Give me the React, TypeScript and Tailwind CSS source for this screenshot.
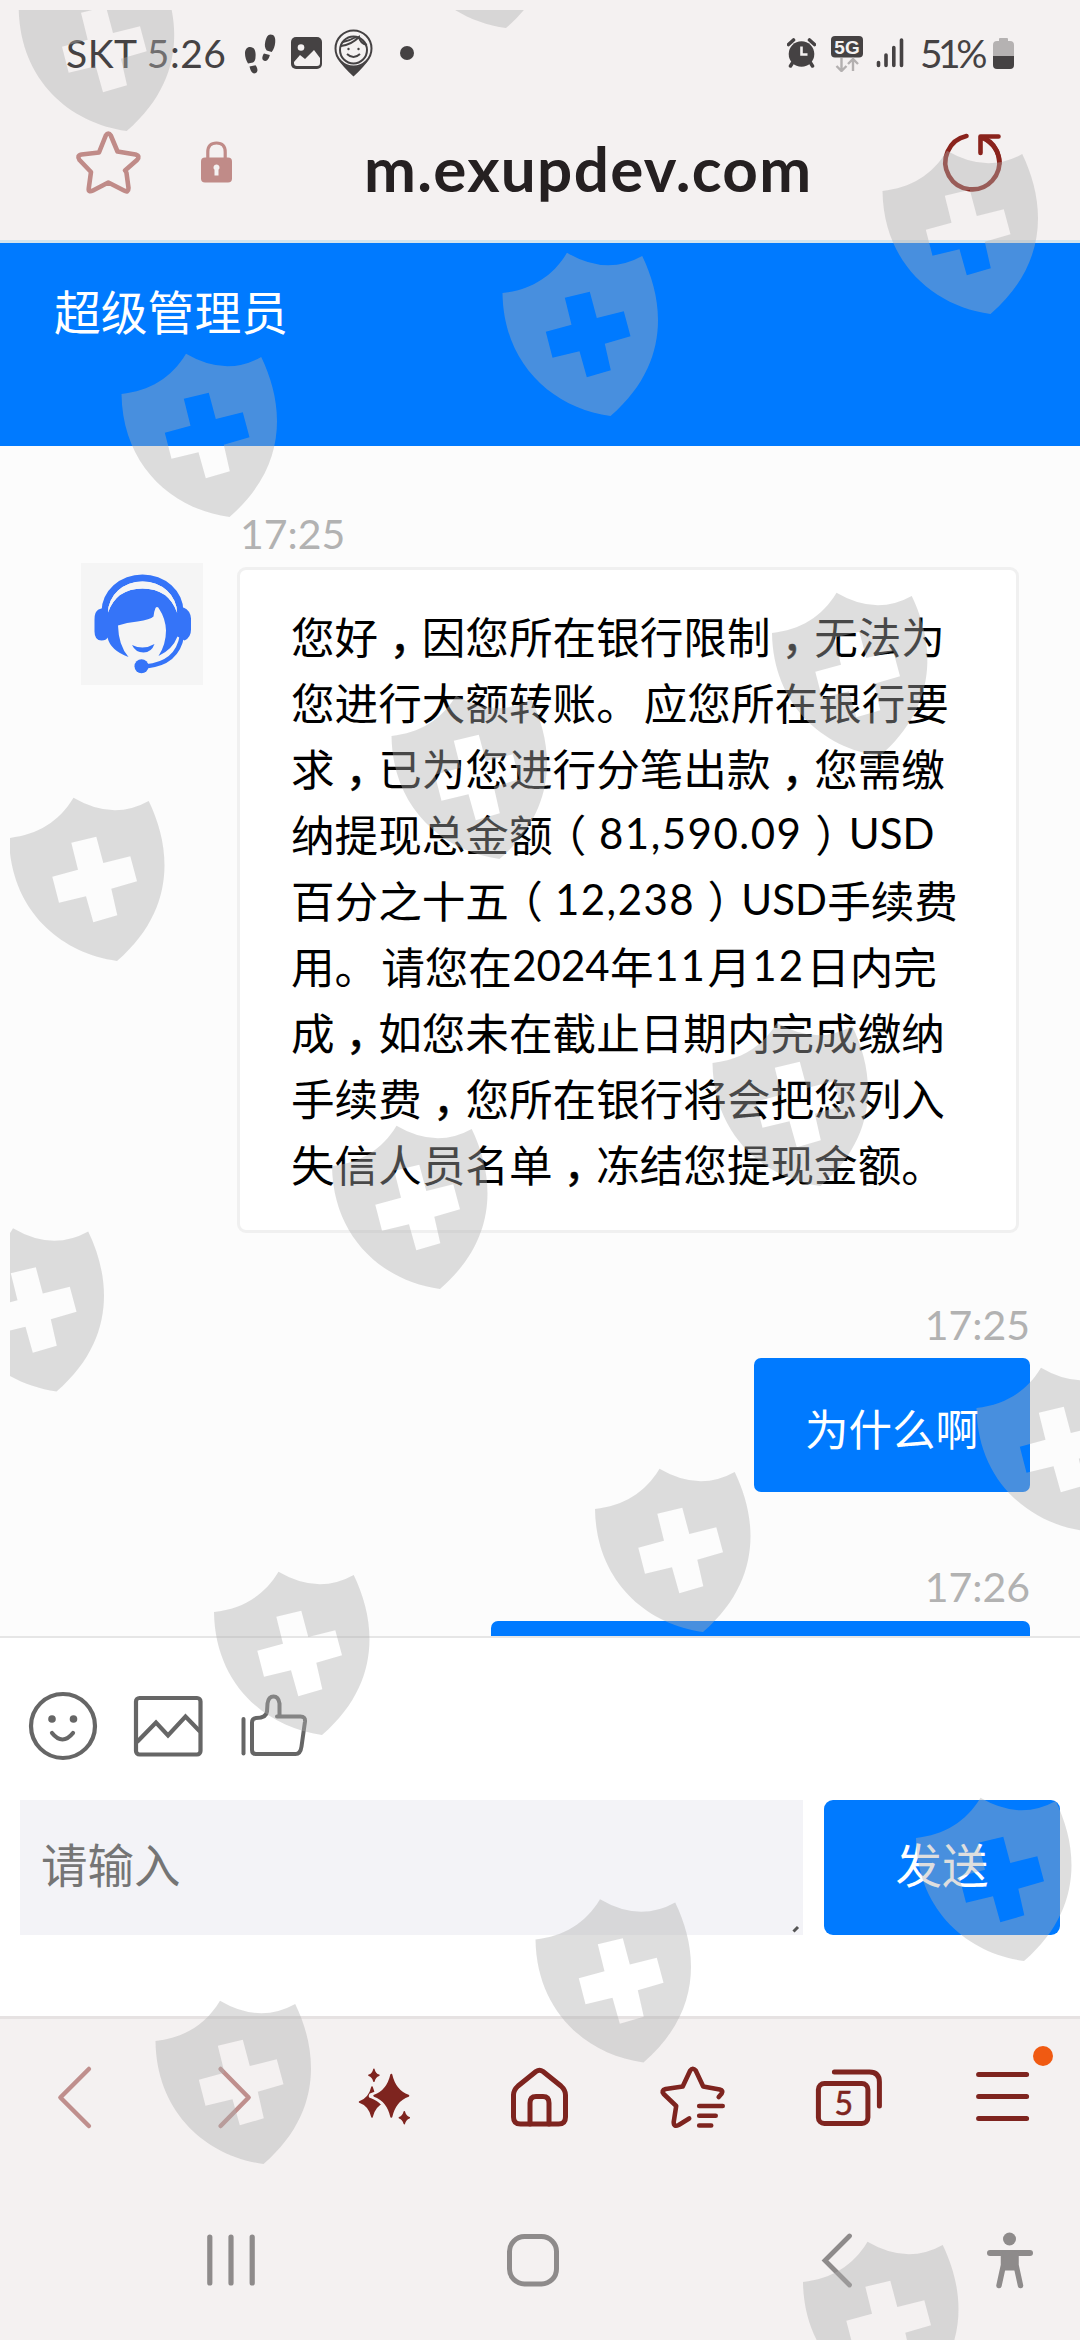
import React from "react";

const CJK = "font-['Noto_Sans_CJK_SC',sans-serif]";
const LATIN = "font-['Lato','Noto_Sans_CJK_SC',sans-serif]";

/* Top-left corner of every watermark shield. */
const SHIELDS: [number, number][] = [
  [18.7, -33], [398, -136], [882.5, 150], [502.5, 252], [121.5, 353],
  [391.5, 695], [772, 592], [9, 797], [-51.5, 1227.5], [332, 1125],
  [712.5, 1022], [976.5, 1367], [595, 1468], [214, 1571], [916, 1797],
  [535.5, 1898.5], [155.5, 2000], [803, 2241],
];

function Watermark() {
  return (
    <svg className="pointer-events-none absolute inset-0" width="1080" height="2340" viewBox="0 0 1080 2340">
      <defs>
        <clipPath id="edge">
          <rect x="10" y="10" width="1070" height="2330" />
        </clipPath>
        <path
          id="shield"
          fillRule="evenodd"
          d="M0 41C28 38 50 25 64.5 .8Q104 24 139.7 4C162 50 168 112 108 164C50 156 1 112 0 41ZM62.3 45.7L87.3 39.7L94.3 66L121.3 59.3L128 84.3L102.3 91.7L108.3 118.3L84.3 125.3L77 99.3L50 105.7L43.3 79.7L69 72.7Z"
        />
      </defs>
      <g clipPath="url(#edge)" fill="rgb(176,176,176)" fillOpacity="0.41">
        {SHIELDS.map(([x, y]) => (
          <use key={`${x}-${y}`} href="#shield" x={x} y={y} />
        ))}
      </g>
    </svg>
  );
}

function StatusBar() {
  return (
    <div className={`flex h-[106px] items-center text-[#454243] ${LATIN}`}>
      <span className="ml-[66px] w-[159px] text-[39px] leading-none tracking-[0.5px] whitespace-nowrap">SKT 5:26</span>
      <svg className="ml-[20px]" width="31" height="42" viewBox="245 32 31 42" fill="currentColor">
        <path d="M250 47c5 0 6 5 5.500 10c0 3-1 4.500-2.500 5.500l-5 1c-2-3-3-7-3-10c0-4 2-6.500 5-6.500zM249.500 66.500l6-1.200c2 2 3.300 7-.3 8c-3.500.7-4.700-3-5.700-6.800z" />
        <path d="M270.500 34.500c4 0 5.200 3.500 4.700 8c-.3 4-1.500 7-3.500 9.500l-5-1.500c-2-3-2.200-5-1.500-8.500c1-4.500 2.500-7.500 5.300-7.500zM264 53.500l5.800 1.600c-.8 3.500-2.500 6.700-5.500 5.700c-3.300-1-1.800-5.300-.3-7.300z" />
      </svg>
      <svg className="ml-[15px]" width="31" height="32" viewBox="0 0 31 32">
        <rect width="31" height="32" rx="5" fill="currentColor" />
        <circle cx="10" cy="10.500" r="3.300" fill="#f4f1f1" />
        <path d="M3 25l6-7l5 4l9-9l6 8v5q0 3-3 3H6q-3 0-3-3z" fill="#f4f1f1" />
      </svg>
      <svg className="ml-[12px]" width="39" height="48" viewBox="334 29 39 48" fill="none" stroke="currentColor" strokeWidth="2">
        <path d="M337 58q6 9 16.500 18.500Q364 67 370 58q-7 9-16.500 9T337 58z" fill="currentColor" stroke="none" />
        <circle cx="353.500" cy="48.500" r="18" />
        <circle cx="353.500" cy="50" r="13.500" />
        <path d="M341 46q10-1 18-9q1 6 8 8M343 42q6-1 13-5" />
        <path d="M347 54q6.500 6 13 0" />
        <circle cx="348.500" cy="49" r="1.200" fill="currentColor" stroke="none" />
        <circle cx="358.500" cy="49" r="1.200" fill="currentColor" stroke="none" />
      </svg>
      <span className="ml-[27px] size-[14px] rounded-full bg-[#454243]" />
      <svg className="ml-[373px]" width="29" height="30" viewBox="787 38 29 30" fill="currentColor">
        <circle cx="801.500" cy="54" r="12.800" />
        <path d="M788.500 44.500l5-4.500M814.500 44.500l-5-4.500" stroke="currentColor" strokeWidth="3.600" strokeLinecap="round" />
        <path d="M793 62l-2.500 4M810 62l2.500 4" stroke="currentColor" strokeWidth="3.500" strokeLinecap="round" />
        <path d="M801.500 46.500v8h6" fill="none" stroke="#f4f1f1" strokeWidth="2.600" />
      </svg>
      <svg className="ml-[15px]" width="32" height="37" viewBox="831 32 32 37">
        <rect x="831" y="33" width="32" height="21.500" rx="4" fill="currentColor" />
        <text x="847" y="50.500" textAnchor="middle" fontSize="19" fontWeight="700" fontFamily="Liberation Sans, sans-serif" fill="#f4f1f1">5G</text>
        <path d="M841.500 55v12M836.500 63l5 5l5-5M853 68V56M848 61l5-5l5 5" fill="none" stroke="#b3b0b0" strokeWidth="2.400" />
      </svg>
      <svg className="ml-[13px]" width="28" height="30" viewBox="875.500 38 28 30" stroke="currentColor" strokeWidth="3.600" strokeLinecap="round">
        <path d="M878 62.500v3M885.500 55v10.500M893.300 47.500v18M901 40v25.500" />
      </svg>
      <span className="ml-[16px] w-[73px] text-[39px] leading-none tracking-[-4.5px] whitespace-nowrap">51%</span>
      <svg width="21" height="32" viewBox="0 0 21 32">
        <path d="M6 2q0-1 1-1h7q1 0 1 1v2h2q4 0 4 4v11H0V8q0-4 4-4h2z" fill="#b5b2b2" />
        <path d="M0 19h21v9q0 4-4 4H4q-4 0-4-4z" fill="currentColor" />
      </svg>
    </div>
  );
}

function AddressBar() {
  return (
    <div className="flex h-[134px] items-center pb-[22px]">
      <svg className="ml-[74px]" width="70" height="70" viewBox="74 127 70 70" fill="none" stroke="#c08b88" strokeWidth="4.600" strokeLinejoin="round">
        <path d="M105.800 135.500Q108.300 131.500 110.800 135.500L117.500 151.500L135.500 154.500Q140.500 156 137 160L125 170.500Q126 171 126.500 173L128.500 188Q128.500 193 124 190.500L108.300 182.500L93 190.500Q88 193 88.800 188L91 172L79.500 160Q76.500 155.500 81.500 154.500L99 152.500Z" />
      </svg>
      <svg className="ml-[57px]" width="31" height="42" viewBox="0 0 31 42">
        <path d="M6.800 19V11q0-9 8.700-9t8.700 9v8" fill="none" stroke="#c08b88" strokeWidth="3.200" />
        <rect y="16.500" width="31" height="25" rx="4" fill="#c08b88" />
        <path d="M15.500 23.500a3 3 0 0 1 2 5.300V34.500h-4v-5.700a3 3 0 0 1 2-5.300z" fill="#f4f1f1" />
      </svg>
      <span className={`mt-[12px] ml-[132px] w-[450px] text-[62px] leading-none font-bold tracking-[1.3px] whitespace-nowrap text-[#252021] ${LATIN}`}>
        m.exupdev.com
      </span>
      <svg className="ml-[125px]" width="66" height="66" viewBox="938 129 66 66" fill="none" stroke="#8a231c" strokeWidth="4.600" strokeLinecap="round" strokeLinejoin="round">
        <path d="M965.500 136A27 27 0 1 0 983 138" />
        <path d="M979.500 153V136.500H997.500M981 137.500Q998 146 998.500 163" />
      </svg>
    </div>
  );
}

function AgentAvatar() {
  return (
    <svg className="shrink-0 bg-[#f5f5f5]" width="122" height="122" viewBox="80.500 563.500 122 122">
      <g fill="#3574f8">
        <path d="M101 612A41 37 0 0 1 183 612L176.500 613A34.500 31 0 0 0 107.500 613Z" />
        <path d="M107.500 608Q102 608 98 610Q94 612 94 620V632Q94 641 101 641Q106 641 107 638Q110 651 128 657.500Q118 646 117.500 626Q126 623 137 622Q150 620 153 617Q153.500 612 155 608.500Q157 606 159 610Q165 619 165.500 631Q165.500 645 158 656.500Q172 650 177 637L184 641Q190.500 638 190.500 630V619Q190 611 183 608L176.500 613Q168 589 142 589T107.500 613Z" />
        <circle cx="141" cy="666.700" r="7" />
        <path d="M131.500 645.500Q143 651 154 644.500Q151 653 143 653Q135 653 131.500 645.500Z" />
      </g>
      <path d="M181.500 636Q177 664 145 667" fill="none" stroke="#3574f8" strokeWidth="4.500" />
      <path d="M107.500 613A34.500 31 0 0 1 176.500 613Q168 589 142 589T107.500 613Z" fill="#f5f5f5" />
    </svg>
  );
}

/* Half-width punctuation padded out to sit near the middle of a full cell. */
const CELL = "inline-block w-[1em] [font-feature-settings:'halt']";
const Comma = () => <span className={`${CELL} pl-[11px] [-webkit-text-stroke:0.5px_black]`}>，</span>;
const Open = () => <span className={`${CELL} pl-[12px]`}>（</span>;
const Close = () => <span className={`${CELL} pl-[10px]`}>）</span>;

function Line({ children }: { children: React.ReactNode }) {
  return <div className="h-[66px]">{children}</div>;
}

function IncomingText() {
  const num = `inline-block h-[66px] align-top text-center whitespace-nowrap text-[42px] ${LATIN}`;
  return (
    <div className={`text-[43.6px] leading-[66px] whitespace-nowrap text-black ${CJK}`}>
      <Line>您好<Comma />因您所在银行限制<Comma />无法为</Line>
      <Line>您进行大额转账。<span className="ml-[4px]">应您所在银行要</span></Line>
      <Line>求<Comma />已为您进行分笔出款<Comma />您需缴</Line>
      <Line>
        纳提现总金额<Open /><span className={`w-[209px] tracking-[1.5px] ${num}`}>81,590.09</span><Close />
        <span className={`w-[83px] ${num}`}>USD</span>
      </Line>
      <Line>
        百分之十五<Open /><span className={`w-[145px] tracking-[1.5px] ${num}`}>12,238</span><Close />
        <span className={`w-[86px] ${num}`}>USD</span>手续费
      </Line>
      <Line>
        用。<span className="ml-[3px]">请您在</span><span className={`w-[98px] ${num}`}>2024</span>年
        <span className={`w-[54px] tracking-[2px] ${num}`}>11</span>月
        <span className={`w-[55px] tracking-[2px] ${num}`}>12</span>日内完
      </Line>
      <Line>成<Comma />如您未在截止日期内完成缴纳</Line>
      <Line>手续费<Comma />您所在银行将会把您列入</Line>
      <Line>失信人员名单<Comma />冻结您提现金额。</Line>
    </div>
  );
}

function Time({ children }: { children: string }) {
  return <div className={`h-[40px] text-[41px] leading-[40px] text-[#b2b2b2] ${LATIN}`}>{children}</div>;
}

function Chat() {
  return (
    <div className="h-[1190px] overflow-hidden bg-[#fcfcfc]">
      <div className="pt-[68px] pl-[240px]">
        <Time>17:25</Time>
      </div>
      <div className="mt-[9px] flex items-start pl-[81px]">
        <AgentAvatar />
        <div className="mt-[4px] ml-[34px] h-[666px] w-[782px] rounded-[9px] border-[3px] border-[#f0f0f0] bg-white pt-[32px] pl-[51px]">
          <IncomingText />
        </div>
      </div>
      <div className="mt-[72px] flex flex-col items-end pr-[50px]">
        <Time>17:25</Time>
        <div className={`mt-[13px] flex h-[134px] w-[276px] items-center justify-center rounded-[7px] bg-[#007aff] pt-[5px] text-[43.5px] leading-none text-white ${CJK}`}>
          为什么啊
        </div>
        <div className="mt-[75px]">
          <Time>17:26</Time>
        </div>
        <div className="mt-[14px] h-[134px] w-[539px] rounded-[7px] bg-[#007aff]" />
      </div>
    </div>
  );
}

function Composer() {
  return (
    <div className="h-[380px] border-t-2 border-[#e6e6e6] bg-white">
      <div className="flex h-[162px] items-center pt-[14px] text-[#666]">
        <svg className="ml-[28px]" width="70" height="70" viewBox="0 0 70 70" fill="none" stroke="currentColor" strokeWidth="4.200" strokeLinecap="round">
          <circle cx="35" cy="35" r="32" />
          <circle cx="24" cy="28" r="3.800" fill="currentColor" stroke="none" />
          <circle cx="45.500" cy="28" r="3.800" fill="currentColor" stroke="none" />
          <path d="M24 42q10.500 13 21 0" />
        </svg>
        <svg className="ml-[35px]" width="70" height="62" viewBox="0 0 70 62" fill="none" stroke="currentColor" strokeWidth="4.200">
          <rect x="3" y="3" width="64.500" height="56.500" rx="3.500" />
          <path d="M4 47L23 27.500L35 40.500L52.500 21.500L67 36.500" />
        </svg>
        <svg className="ml-[37px]" width="70" height="64" viewBox="240 1694 70 64" fill="none" stroke="currentColor" strokeWidth="4" strokeLinecap="round" strokeLinejoin="round">
          <path d="M243.500 1719v34.500" />
          <path d="M277 1716.500h23.500q5 0 4.500 5l-3.500 25q-1 7.500-6 7.500h-39.500q-4 0-4-4v-27.500q0-4 4-4.500c6 0 10.500-1 11-6.500l.5-8q1-7 6-7t6 7v13z" />
        </svg>
      </div>
      <div className="flex px-[20px]">
        <div className={`flex h-[135px] w-[783px] justify-between bg-[#f3f3f7] pl-[21px] text-[46.500px] leading-[126px] text-[#757575] ${CJK}`}>
          <span>请输入</span>
          <svg className="mr-[3px] self-end" width="8" height="10" viewBox="0 0 8 10">
            <path d="M1.500 6.500L6 2" stroke="#555" strokeWidth="3" />
          </svg>
        </div>
        <div className={`ml-[21px] flex h-[135px] w-[236px] items-center justify-center rounded-[9px] bg-[#007aff] pb-[8px] text-[46.500px] leading-none text-white ${CJK}`}>
          发送
        </div>
      </div>
    </div>
  );
}

function ToolIcon({ x, children }: { x: number; children: React.ReactNode }) {
  return (
    <svg
      className="justify-self-center"
      width="80"
      height="80"
      viewBox={`${x} 2057 80 80`}
      fill="none"
      stroke="#7e241f"
      strokeWidth="5"
      strokeLinecap="round"
      strokeLinejoin="round"
    >
      {children}
    </svg>
  );
}

function star(cx: number, cy: number, rx: number, ry: number) {
  const k = 0.22;
  return `M${cx} ${cy - ry}Q${cx + rx * k} ${cy - ry * k} ${cx + rx} ${cy}Q${cx + rx * k} ${cy + ry * k} ${cx} ${cy + ry}Q${cx - rx * k} ${cy + ry * k} ${cx - rx} ${cy}Q${cx - rx * k} ${cy - ry * k} ${cx} ${cy - ry}Z`;
}

function BrowserToolbar() {
  return (
    <div className="grid h-[160px] grid-cols-7 items-center border-t-[3px] border-[#e6e2e2] pb-[2px]">
      <ToolIcon x={37.1}>
        <path d="M89 2069L60.500 2097.500L89 2126" stroke="#bf8f8d" strokeWidth="4.500" />
      </ToolIcon>
      <ToolIcon x={191.4}>
        <path d="M221 2069L249 2097.500L221 2126" stroke="#bf8f8d" strokeWidth="4.500" />
      </ToolIcon>
      <ToolIcon x={345.7}>
        <g fill="#7e241f" strokeWidth="1.500">
          <path d={star(373.6, 2075.3, 5, 6)} />
          <path d={star(404, 2117.7, 5, 6)} />
          <path d={star(371.7, 2102, 12.5, 15)} />
          <path d={star(391, 2095.7, 20, 24)} stroke="#f4f1f1" strokeWidth="5" />
          <path d={star(391, 2095.7, 17, 21)} strokeWidth="2" />
        </g>
      </ToolIcon>
      <ToolIcon x={500}>
        <path d="M536 2071.500Q539.500 2069 543 2071.500L561 2086Q565.500 2090 565.500 2095V2117Q565.500 2124 558.500 2124H520.500Q513.500 2124 513.500 2117V2095Q513.500 2090 518 2086Z" />
        <path d="M530 2124V2103Q530 2096.500 536 2096.500H543Q549 2096.500 549 2103V2124" />
      </ToolIcon>
      <ToolIcon x={654.3}>
        <path d="M719 2097L722 2093.500Q724 2090.500 720 2089.500L703.500 2086.500L696 2070.500Q693 2067 690.500 2070.500L683 2086.500L666 2089Q661 2090.500 664 2094L676.500 2106L674 2122Q674 2127.500 679 2125L689.500 2118.500" strokeWidth="4.600" />
        <path d="M699.500 2106H723M699.500 2115.700H716M699.500 2125.500H711.500" strokeWidth="4.600" />
      </ToolIcon>
      <ToolIcon x={808.6}>
        <rect x="818" y="2083.500" width="49.500" height="40" rx="6" />
        <path d="M834 2072H869Q879 2072 879 2082V2106" />
        <text x="843.500" y="2115" textAnchor="middle" fontSize="32" fontFamily="Lato, sans-serif" fill="#7e241f" stroke="#7e241f" strokeWidth="0.6">5</text>
      </ToolIcon>
      <div className="relative justify-self-center">
        <ToolIcon x={962.9}>
          <path d="M978.500 2074.500H1026.500M978.500 2096.500H1026.500M978.500 2118.500H1026.500" />
        </ToolIcon>
        <span className="absolute -top-[11px] left-[70px] size-[20px] rounded-full bg-[#f05a12]" />
      </div>
    </div>
  );
}

function SystemNav() {
  return (
    <div className="flex h-[164px] items-center pt-[4px]">
      <svg className="ml-[206px]" width="50" height="56" viewBox="0 0 50 56" stroke="#8e8b8b" strokeWidth="5.200" strokeLinecap="round">
        <path d="M3.800 5v46M25 5v46M46.200 5v46" />
      </svg>
      <svg className="ml-[249px]" width="56" height="56" viewBox="505 2232 56 56" fill="none" stroke="#8e8b8b" strokeWidth="5">
        <rect x="509.500" y="2236.500" width="47" height="47.500" rx="15" />
      </svg>
      <svg className="ml-[260px]" width="34" height="56" viewBox="821 2232 34 56" fill="none" stroke="#8e8b8b" strokeWidth="4.800" strokeLinecap="round">
        <path d="M849.500 2236L825 2260.500L849.500 2285" />
      </svg>
      <svg className="ml-[131px]" width="48" height="60" viewBox="986 2231 48 60" fill="#8e8b8b" stroke="#8e8b8b" strokeLinecap="round" strokeLinejoin="round">
        <circle cx="1009.500" cy="2240" r="6.500" stroke="none" />
        <path d="M990 2254H1030" strokeWidth="6" />
        <path d="M1003.500 2255V2266L999 2286.500M1016 2255V2266L1020.500 2286.500" strokeWidth="5.500" />
        <path d="M1003 2255H1016.500V2266L1015 2271H1004.500Z" strokeWidth="1" />
      </svg>
    </div>
  );
}

export default function App() {
  return (
    <div className="relative flex h-[2340px] w-[1080px] flex-col overflow-hidden bg-[#f4f1f1]">
      <StatusBar />
      <AddressBar />
      <div className="h-[206px] border-t-[3px] border-[#d4e4ee] bg-[#007aff]">
        <div className={`pt-[42px] pl-[54px] text-[46.800px] leading-[50px] text-white ${CJK}`}>超级管理员</div>
      </div>
      <Chat />
      <Composer />
      <BrowserToolbar />
      <SystemNav />
      <Watermark />
    </div>
  );
}
